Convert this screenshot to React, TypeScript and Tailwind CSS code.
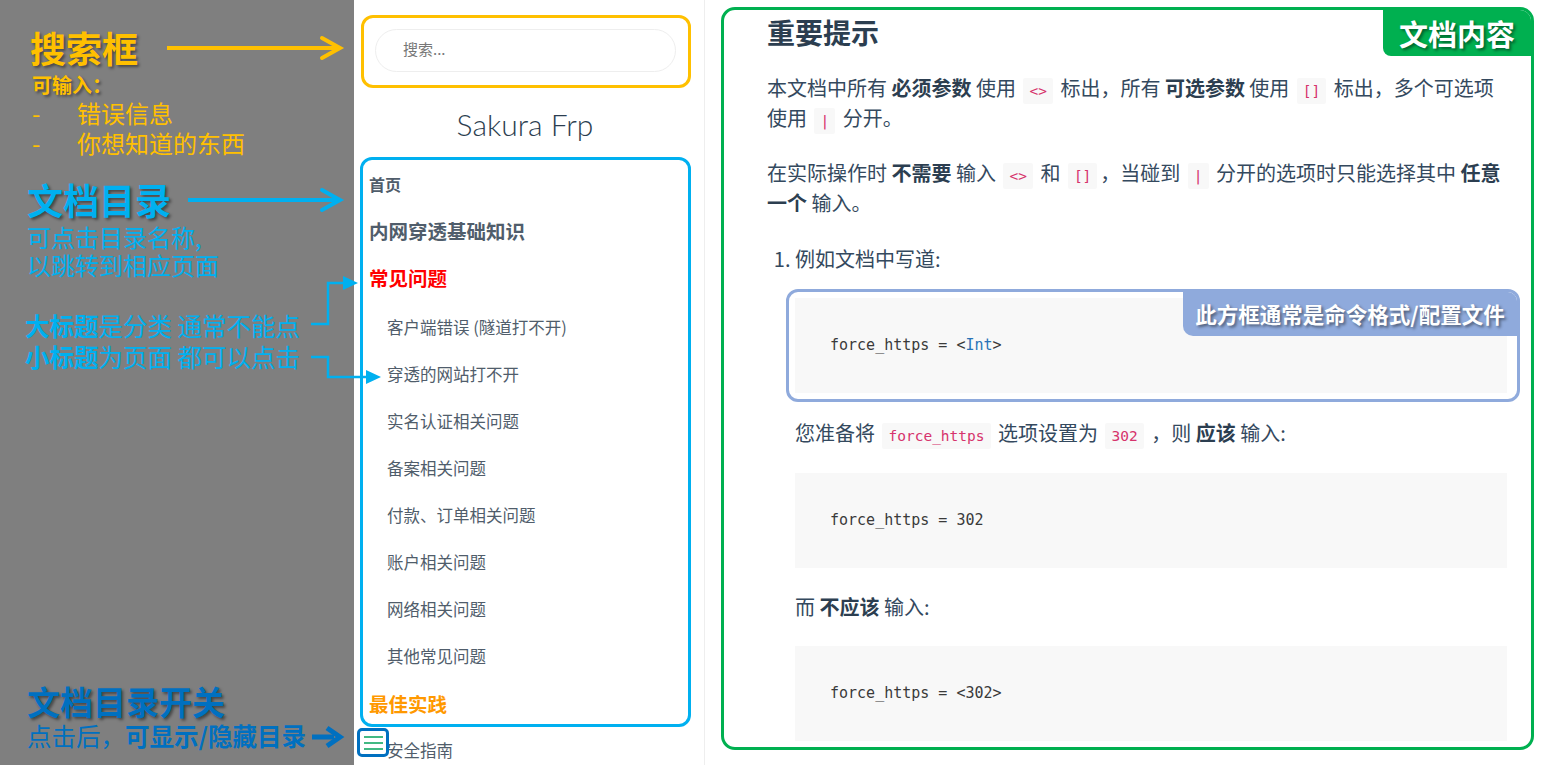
import React from 'react';

const subItems = [
  '客户端错误 (隧道打不开)',
  '穿透的网站打不开',
  '实名认证相关问题',
  '备案相关问题',
  '付款、订单相关问题',
  '账户相关问题',
  '网络相关问题',
  '其他常见问题',
];

function Code({ children }: { children: React.ReactNode }) {
  return (
    <code className="mx-[3px] rounded-[2px] bg-[#f8f8f8] px-[6px] py-[5px] font-['DejaVu_Sans_Mono',monospace] text-[14.5px] leading-none text-[#d6336c]">
      {children}
    </code>
  );
}

function Block({ children }: { children: React.ReactNode }) {
  return (
    <pre className="h-[95px] bg-[#f8f8f8] px-[35px] py-[35px] font-['DejaVu_Sans_Mono',monospace] text-[15px] leading-[25px] text-[#3a3a3a]">
      {children}
    </pre>
  );
}

function Arrows() {
  return (
    <svg
      className="pointer-events-none absolute left-0 top-0 z-20"
      width="1546"
      height="765"
      viewBox="0 0 1546 765"
      fill="none"
    >
      <line x1="167" y1="48" x2="337" y2="48" stroke="#ffc000" strokeWidth="4" />
      <polyline points="322,38 340,48 322,58" stroke="#ffc000" strokeWidth="4" strokeLinecap="round" />
      <line x1="188" y1="200" x2="337" y2="200" stroke="#00b0f0" strokeWidth="4" />
      <polyline points="322,190 340,200 322,210" stroke="#00b0f0" strokeWidth="4" strokeLinecap="round" />
      <polyline points="311,324 328,324 328,283 345,283" stroke="#00b0f0" strokeWidth="2.5" />
      <polygon points="343,276 358,283 343,290" fill="#00b0f0" />
      <polyline points="311,357 328,357 328,377 368,377" stroke="#00b0f0" strokeWidth="2.5" />
      <polygon points="366,370 381,377 366,384" fill="#00b0f0" />
      <line x1="312" y1="737" x2="334" y2="737" stroke="#0070c0" strokeWidth="5" />
      <polyline points="327,728 340,737 327,746" stroke="#0070c0" strokeWidth="5" />
    </svg>
  );
}

export default function App() {
  const shadow = '[text-shadow:2px_2px_3px_rgba(0,0,0,0.45)]';
  return (
    <div className="relative flex h-[765px] w-[1546px] overflow-hidden bg-white font-['Noto_Sans_CJK_SC',sans-serif]">
      <Arrows />

      {/* annotation column */}
      <aside className="flex w-[354px] shrink-0 flex-col bg-[#7f7f7f]">
        <div className={`ml-[30px] mt-[25px] text-[36px] font-bold leading-[44px] text-[#ffc000] ${shadow}`}>搜索框</div>
        <div className={`ml-[32px] mt-[2px] text-[20px] font-bold leading-[28px] text-[#ffc000] ${shadow}`}>可输入：</div>
        <div className="ml-[32px] mt-[-1px] text-[24px] leading-[30px] text-[#ffc000]">
          <div className="flex"><span className="w-[45px]">-</span>错误信息</div>
          <div className="flex"><span className="w-[45px]">-</span>你想知道的东西</div>
        </div>
        <div className={`ml-[27px] mt-[19px] text-[36px] font-bold leading-[44px] text-[#00b0f0] ${shadow}`}>文档目录</div>
        <div className="ml-[27px] mt-[2px] text-[24px] leading-[28px] text-[#00b0f0]">
          <div>可点击目录名称,</div>
          <div>以跳转到相应页面</div>
        </div>
        <div className="ml-[25px] mt-[31px] text-[24.5px] leading-[31px] text-[#00b0f0]">
          <div><b>大标题</b>是分类 通常不能点</div>
          <div><b>小标题</b>为页面 都可以点击</div>
        </div>
        <div className="mt-auto pb-[14px] pl-[27px] text-[#0070c0]">
          <div className={`text-[33px] font-bold leading-[40px] ${shadow}`}>文档目录开关</div>
          <div className="text-[24.5px] leading-[30px]">
            点击后，<b>可显示/隐藏目录</b>
          </div>
        </div>
      </aside>

      {/* sidebar */}
      <nav className="relative w-[351px] shrink-0 border-r border-[#eee]">
        <div className="ml-[7px] mt-[15px] h-[73px] w-[330px] rounded-[12px] border-[3px] border-[#ffc000] px-[11px] pt-[11px]">
          <input
            placeholder="搜索..."
            className="h-[43px] w-[301px] rounded-full border border-[#eee] bg-white pb-[4px] pl-[27px] text-[15px] text-[#34495e] outline-none placeholder:text-[#777]"
          />
        </div>
        <div className="mt-[16px] pr-[8px] text-center font-['Lato',sans-serif] text-[30px] font-light leading-[40px] text-[#2c3e50]">
          Sakura Frp
        </div>
        <div className="ml-[6px] mt-[13px] w-[331px] rounded-[12px] border-[3px] border-[#00b0f0] pl-[6px]">
          <div className="flex h-[47px] items-center text-[16px] font-bold text-[#505d6b]">首页</div>
          <div className="flex h-[47px] items-center text-[19.5px] font-bold text-[#505d6b]">内网穿透基础知识</div>
          <div className="flex h-[47px] items-center text-[19.5px] font-bold text-[#ff0000]">常见问题</div>
          {subItems.map((s) => (
            <div key={s} className="flex h-[47px] items-center pl-[18px] pt-[5px] text-[16.5px] text-[#505d6b]">
              {s}
            </div>
          ))}
          <div className="flex h-[47px] items-center pt-[7px] text-[19.5px] font-bold text-[#ff9900]">最佳实践</div>
        </div>
        <div className="flex h-[47px] items-center pl-[33px] text-[16.5px] text-[#505d6b]">安全指南</div>

        <button className="absolute left-[3px] top-[728px] z-10 flex h-[29px] w-[32px] flex-col items-center justify-center gap-[4px] rounded-[5px] border-[3px] border-[#0070c0] bg-white">
          <span className="h-[2px] w-[19px] bg-[#42b983]" />
          <span className="h-[2px] w-[19px] bg-[#42b983]" />
          <span className="h-[2px] w-[19px] bg-[#42b983]" />
        </button>
      </nav>

      {/* content */}
      <main className="flex-1 pl-[16px] pr-[12px] pt-[7px]">
        <div className="relative h-[743px] overflow-hidden rounded-[14px] border-[3px] border-[#00b050] pl-[43px] pr-[24px] pt-[4px] text-[20px] leading-[30px] text-[#34495e]">
          <div className={`absolute right-0 top-0 flex h-[46px] w-[148px] items-center justify-center rounded-bl-[8px] bg-[#00b050] text-[29px] font-bold text-white ${shadow}`}>
            文档内容
          </div>

          <h1 className="text-[28px] font-bold leading-[36px] text-[#2c3e50]">重要提示</h1>

          <p className="mt-[23px] whitespace-nowrap">
            本文档中所有 <strong className="text-[#2c3e50]">必须参数</strong> 使用 <Code>&lt;&gt;</Code> 标出，所有{' '}
            <strong className="text-[#2c3e50]">可选参数</strong> 使用 <Code>[]</Code> 标出，多个可选项
            <br />
            使用 <Code>|</Code> 分开。
          </p>

          <p className="mt-[25px] whitespace-nowrap">
            在实际操作时 <strong className="text-[#2c3e50]">不需要</strong> 输入 <Code>&lt;&gt;</Code> 和 <Code>[]</Code>，当碰到{' '}
            <Code>|</Code> 分开的选项时只能选择其中 <strong className="text-[#2c3e50]">任意</strong>
            <br />
            <strong className="text-[#2c3e50]">一个</strong> 输入。
          </p>

          <ol className="mt-[26px] list-decimal pl-[28px]">
            <li>
              <p>例如文档中写道:</p>

              <div className="relative mt-[24px]">
                <Block>
                  force_https = &lt;<span className="text-[#2973b7]">Int</span>&gt;
                </Block>
                <div className="pointer-events-none absolute -bottom-[9px] -left-[9px] -right-[13px] -top-[9px] overflow-hidden rounded-[12px] border-[3px] border-[#8faadc]">
                  <div className={`absolute right-0 top-0 flex h-[44px] w-[334px] items-center justify-center rounded-bl-[10px] bg-[#8faadc] text-[21.5px] font-bold text-white ${shadow}`}>
                    此方框通常是命令格式/配置文件
                  </div>
                </div>
              </div>

              <p className="mt-[25px]">
                您准备将 <Code>force_https</Code> 选项设置为 <Code>302</Code> ，则{' '}
                <strong className="text-[#2c3e50]">应该</strong> 输入:
              </p>

              <div className="mt-[25px]">
                <Block>force_https = 302</Block>
              </div>

              <p className="mt-[24px]">
                而 <strong className="text-[#2c3e50]">不应该</strong> 输入:
              </p>

              <div className="mt-[24px]">
                <Block>force_https = &lt;302&gt;</Block>
              </div>
            </li>
          </ol>
        </div>
      </main>
    </div>
  );
}
